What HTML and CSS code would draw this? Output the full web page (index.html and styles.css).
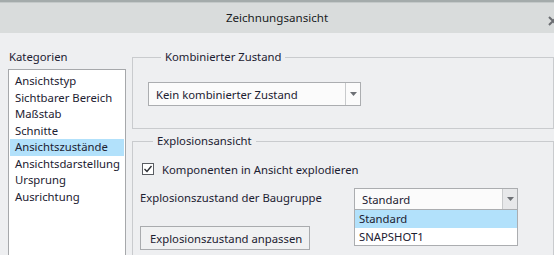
FILE: index.html
```html
<!DOCTYPE html>
<html>
<head>
<meta charset="utf-8">
<link rel="stylesheet" href="styles.css">
</head>
<body>
<div class="window">
  <div class="titlebar">
    <span class="title">Zeichnungsansicht</span>
    <svg class="close" width="10" height="10" viewBox="0 0 10 10"><path d="M1 1 L9 9 M9 1 L1 9" stroke="#6b6e72" stroke-width="2"/></svg>
  </div>
  <div class="content">
    <div class="left">
      <div class="label">Kategorien</div>
      <ul class="list">
        <li>Ansichtstyp</li>
        <li>Sichtbarer Bereich</li>
        <li>Maßstab</li>
        <li>Schnitte</li>
        <li class="sel">Ansichtszustände</li>
        <li>Ansichtsdarstellung</li>
        <li>Ursprung</li>
        <li>Ausrichtung</li>
      </ul>
    </div>
    <div class="right">
      <fieldset class="group g1">
        <legend>Kombinierter Zustand</legend>
        <div class="combo combo1">
          <span class="val">Kein kombinierter Zustand</span>
          <span class="btn"><svg width="7" height="4" viewBox="0 0 7 4"><path d="M0 0 H7 L3.5 4 Z" fill="#6d7075"/></svg></span>
        </div>
      </fieldset>
      <fieldset class="group g2">
        <legend>Explosionsansicht</legend>
        <div class="check-row">
          <span class="checkbox"><svg width="10" height="10" viewBox="0 0 10 10"><path d="M1.5 5 L4 7.5 L8.5 2" stroke="#2b2d33" stroke-width="1.4" fill="none"/></svg></span>
          <span>Komponenten in Ansicht explodieren</span>
        </div>
        <div class="state-row">
          <span class="state-label">Explosionszustand der Baugruppe</span>
          <div class="combo combo2">
            <span class="val">Standard</span>
            <span class="btn"><svg width="7" height="4" viewBox="0 0 7 4"><path d="M0 0 H7 L3.5 4 Z" fill="#6d7075"/></svg></span>
            <ul class="dropdown">
              <li class="sel">Standard</li>
              <li>SNAPSHOT1</li>
            </ul>
          </div>
        </div>
        <button class="pushbtn">Explosionszustand anpassen</button>
      </fieldset>
    </div>
  </div>
</div>
</body>
</html>
```
FILE: styles.css
```css
* { box-sizing: border-box; }
html, body {
  margin: 0;
  padding: 0;
  width: 554px;
  height: 255px;
  overflow: hidden;
  background: #eeeff1;
  font-family: "Noto Sans", "Open Sans", sans-serif;
  font-size: 11.3px;
  color: #1c2131;
}
.window { width: 554px; height: 255px; overflow: hidden; }
.titlebar {
  height: 33px;
  background: #d9dcdc;
  border-top: 2px solid #a4abab;
  box-shadow: inset 0 1px 0 #c4c9c9;
  display: flex;
  align-items: center;
  justify-content: center;
  position: relative;
}
.title { font-size: 11.6px; color: #1a1d24; }
.close { position: absolute; right: -4px; top: 14px; }
.content { display: flex; }
.left { width: 132px; padding-left: 8px; padding-top: 16px; }
.label { height: 16px; line-height: 16px; padding-left: 1px; }
.list {
  list-style: none;
  margin: 4px 0 0 0;
  padding: 3px 1px;
  width: 118px;
  height: 200px;
  border: 1px solid #a6a8ab;
  background: #ffffff;
}
.list li { height: 16.5px; line-height: 16px; padding-left: 5px; white-space: nowrap; }
.list li.sel { background: #b2e1fb; }
.right { width: 422px; padding-top: 16px; }
.group {
  margin: 0;
  padding: 0;
  border: 1px solid #c9cbce;
  min-width: 0;
}
.group legend {
  margin-left: 13px;
  padding: 0 4px;
  line-height: 16px;
  height: 16px;
}
.g1 { padding: 17px 0 22px 15px; }
.g2 { margin-top: 4px; padding: 12px 0 20px 7px; }
.combo {
  position: relative;
  display: flex;
  align-items: center;
  background: #fbfbfb;
  border: 1px solid #abadb0;
}
.combo1 { width: 213px; height: 24px; }
.combo .val { flex: 1; padding-left: 7px; white-space: nowrap; }
.combo .btn {
  width: 15px;
  height: 100%;
  border-left: 1px solid #c8cacc;
  display: flex;
  align-items: center;
  justify-content: center;
}
.combo2 { width: 164px; height: 22px; }
.combo2 .btn { background: #e7e8ea; }
.check-row { display: flex; align-items: center; height: 16px; padding-left: 2px; white-space: nowrap; }
.checkbox {
  width: 12px;
  height: 12px;
  border: 1px solid #5a5d63;
  background: #ffffff;
  display: flex;
  align-items: center;
  justify-content: center;
  margin-right: 8px;
}
.state-row { display: flex; align-items: center; margin-top: 11px; height: 22px; }
.state-label { width: 214px; margin-top: -4px; white-space: nowrap; }
.dropdown {
  position: absolute;
  left: -1px;
  top: 20px;
  width: 164px;
  margin: 0;
  padding: 0;
  list-style: none;
  background: #ffffff;
  border: 1px solid #abadb0;
  z-index: 2;
}
.dropdown li { height: 17px; line-height: 17px; padding-left: 4px; }
.dropdown li.sel { background: #b2e1fb; height: 18px; }
.pushbtn {
  display: block;
  margin-top: 16px;
  width: 170px;
  height: 24px;
  font: inherit;
  color: inherit;
  background: #f0f1f2;
  border: 1px solid #a9abae;
  border-radius: 0;
  padding: 0 0 0 9px;
  text-align: left;
  white-space: nowrap;
}
```
